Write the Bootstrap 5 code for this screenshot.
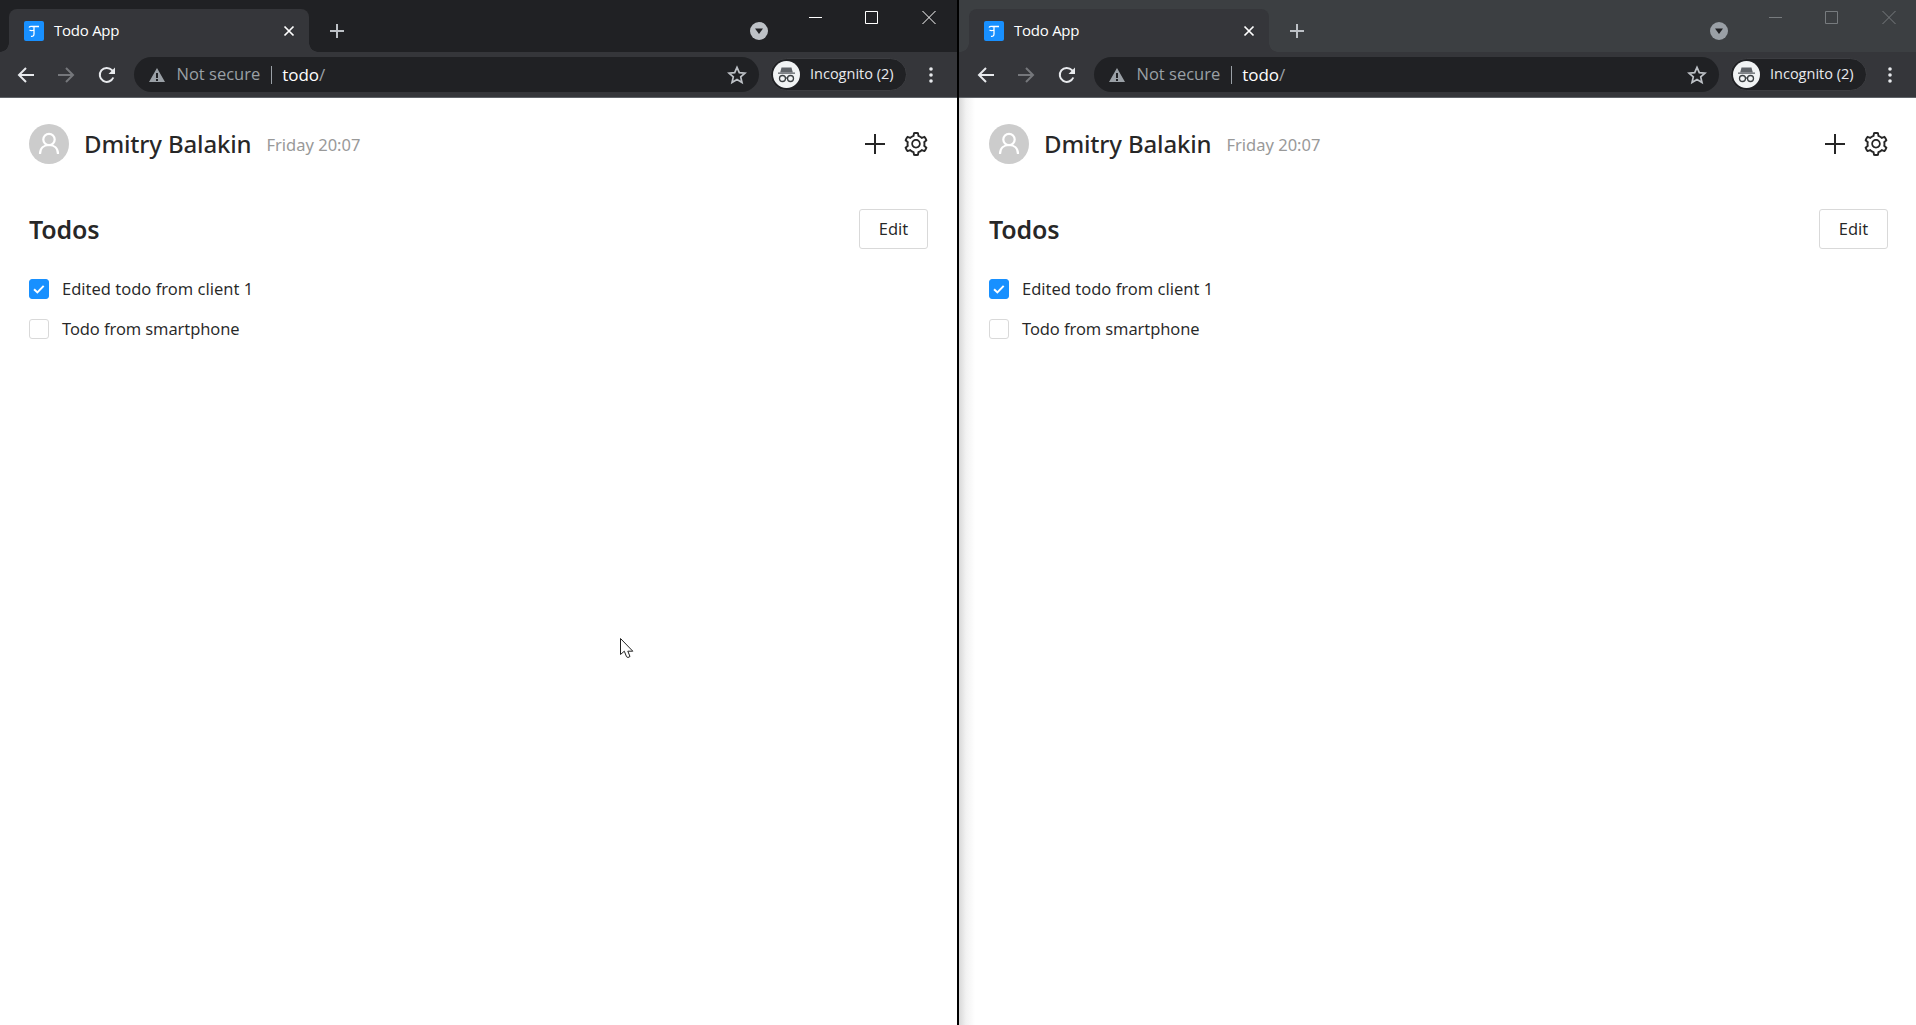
<!DOCTYPE html>
<html lang="en">
<head>
  <meta charset="UTF-8">
  <meta name="viewport" content="width=device-width, initial-scale=1">
  <title>Todo App</title>
  <link href="https://cdn.jsdelivr.net/npm/bootstrap@5.3.3/dist/css/bootstrap.min.css" rel="stylesheet">
  <style>
    html, body { height: 100%; }
    body { font-family: "Noto Sans", "Open Sans", sans-serif; background: #000; overflow: hidden; }

    .desktop { height: 1025px; position: relative; }
    .win-left { width: 957px; margin-right: 2px; }
    .win-right { width: 957px; }

    /* chrome frame */
    .tabstrip { height: 52px; background: #202124; padding-left: 9px; }
    .win-right .tabstrip { background: #3c3f42; padding-left: 10px; }
    .win-tab {
      width: 300px; height: 43px; margin-top: 9px; padding: 0 14px 0 15px;
      background: #35363a; border-radius: 8px 8px 0 0; position: relative;
      color: #fff; font-size: 15px; font-family: "Open Sans", sans-serif;
    }
    .win-tab::before, .win-tab::after {
      content: ""; position: absolute; bottom: 0; width: 9px; height: 9px;
    }
    .win-tab::before { left: -9px; background: radial-gradient(circle at 0 0, transparent 8.5px, #35363a 9px); }
    .win-tab::after { right: -9px; background: radial-gradient(circle at 100% 0, transparent 8.5px, #35363a 9px); }
    .fav-icon { width: 20px; height: 20px; background: #1890ff; border-radius: 2px; flex: none; }
    .tab-label { margin-left: 10px; letter-spacing: -.25px; }
    .new-tab { margin-left: 20px; margin-top: 9px; }
    .list-drop { margin-left: auto; margin-top: 22px; width: 18px; height: 18px; margin-right: 189px; border-radius: 50%; background: #bdc1c6; }
    .win-right .list-drop { background: #9aa0a6; margin-right: 188px; }
    .win-btns { position: absolute; top: 0; right: 5px; color: #fff; }
    .win-right .win-btns { right: 4px; color: #777b7e; }

    .toolbar { height: 46px; background: #35363a; border-bottom: 1px solid #5f6368; padding-left: 16px; }
    .win-right .toolbar { padding-left: 17px; }
    .tool-btn { width: 20px; height: 20px; flex: none; }
    .omnibox {
      width: 625px; height: 35px; margin-left: 17px; padding: 0 12px 0 15px; flex: none;
      background: #202124; border-radius: 18px; font-size: 17px; font-family: "Open Sans", sans-serif;
    }
    .not-secure { color: #9aa0a6; margin-left: 11.500px; font-size: 16.500px; }
    .url-sep { width: 1px; height: 18px; background: #9aa0a6; margin: 0 10px 0 11px; }
    .url-host { color: #fff; }
    .url-path { color: #9aa0a6; }
    .incog-pill {
      width: 137px; height: 33px; margin-left: 11px; padding-left: 2px; flex: none;
      background: #202124; border: 1px solid #3c3d41; border-radius: 17px;
      color: #e8eaed; font-size: 14.500px; font-family: "Open Sans", sans-serif;
    }
    .incog-label { margin-top: -2px; }
    .incog-face { width: 27px; height: 27px; margin-right: 10px; }
    .tool-menu { margin-right: 24px; }

    /* page */
    .page { height: 927px; background: #fff; padding: 26px 29px 0; color: rgba(0,0,0,.85); position: relative; }
    .win-right .page { background: linear-gradient(90deg, #d8d8d8 0, #f2f2f2 7px, #fff 16px); padding: 26px 28px 0 30px; }
    .user-avatar { width: 40px; height: 40px; background: #ccc; border-radius: 50%; flex: none; }
    .user-name { font-size: 24px; font-weight: 500; margin: 0 0 0 15px; line-height: 40px; letter-spacing: -.15px; }
    .user-time { font-size: 16.500px; color: #999; margin-left: 15px; margin-top: 2px; }
    .head-actions { gap: 19px; }
    .todo-head { margin-top: 45px; }
    .todo-title { font-size: 25px; font-weight: 600; margin: 0; letter-spacing: -.2px; }
    .edit-btn {
      width: 69px; height: 40px; padding: 0; font-size: 16.500px; background: #fff;
      color: rgba(0,0,0,.85); border: 1px solid #d9d9d9; border-radius: 3px;
    }
    .todo-rows { margin-top: 20px; font-size: 16.500px; }
    .todo-row { height: 40px; }
    .todo-text-b { letter-spacing: -.1px; }
    .tick { width: 20px; height: 20px; border: 1px solid #d9d9d9; border-radius: 3px; margin-right: 13px; background: #fff; flex: none; }
    .tick-on { background: #1890ff; border-color: #1890ff; }
    .mouse-cursor { position: absolute; left: 620px; top: 540px; }
  </style>
</head>
<body>

<svg width="0" height="0" class="position-absolute">
  <symbol id="ico-fav" viewBox="0 0 20 20"><path d="M5 6.500c1-1.600 2-1 3.500-1H15M10 5.500V13c0 2-1.400 2.800-3 2.300M5.500 9c1.500 1 3.500.5 4.500 0" fill="none" stroke="#fff" stroke-width="1.300"/></symbol>
  <symbol id="ico-x" viewBox="0 0 12 12"><path d="M1.500 1.500l9 9m0-9l-9 9" stroke="currentColor" stroke-width="1.700" fill="none"/></symbol>
  <symbol id="ico-new" viewBox="0 0 16 16"><path d="M8 1v14M1 8h14" stroke="currentColor" stroke-width="2" fill="none"/></symbol>
  <symbol id="ico-drop" viewBox="0 0 18 18"><path d="M5 6.500h8L9 12z" fill="#202124"/></symbol>
  <symbol id="ico-back" viewBox="0 0 20 20"><path d="M18 10H3M10 3l-7 7 7 7" stroke="currentColor" stroke-width="2" fill="none"/></symbol>
  <symbol id="ico-fwd" viewBox="0 0 20 20"><path d="M2 10h15M10 3l7 7-7 7" stroke="currentColor" stroke-width="2" fill="none"/></symbol>
  <symbol id="ico-reload" viewBox="0 0 20 20"><path d="M16.300 12.500A7 7 0 1 1 15 5.200L17 7" stroke="currentColor" stroke-width="2" fill="none"/><path d="M18 2.500V9h-6.500z" fill="currentColor"/></symbol>
  <symbol id="ico-warn" viewBox="0 0 16 16"><path d="M8 1l8 14H0zM7 6v5h2V6zm0 6v2h2v-2z" fill="#9aa0a6" fill-rule="evenodd"/></symbol>
  <symbol id="ico-star" viewBox="0 0 20 20"><path d="M10 2.300l2.300 5.300 5.700.5-4.300 3.800 1.300 5.600-5-3-5 3 1.300-5.600L2 8.100l5.700-.5z" stroke="#bdc1c6" stroke-width="1.700" fill="none"/></symbol>
  <symbol id="ico-incog" viewBox="0 0 27 27"><circle cx="13.500" cy="13.500" r="13.500" fill="#f1f3f4"/><path d="M8.500 6.500h10l1.300 5H7.200z" fill="#5f6368"/><path d="M5 11.500h17v1.300H5z" fill="#5f6368"/><circle cx="9.500" cy="17.500" r="3" fill="none" stroke="#3c4043" stroke-width="1.300"/><circle cx="17.500" cy="17.500" r="3" fill="none" stroke="#3c4043" stroke-width="1.300"/><path d="M12.500 17h2" stroke="#3c4043" stroke-width="1.300"/></symbol>
  <symbol id="ico-dots" viewBox="0 0 4 16"><circle cx="2" cy="2" r="1.800" fill="#e8eaed"/><circle cx="2" cy="8" r="1.800" fill="#e8eaed"/><circle cx="2" cy="14" r="1.800" fill="#e8eaed"/></symbol>
  <symbol id="ico-user" viewBox="0 0 40 40"><circle cx="20" cy="15.500" r="5.700" fill="none" stroke="#fff" stroke-width="2.200"/><path d="M11 30c0-6 4-9 9-9s9 3 9 9" fill="none" stroke="#fff" stroke-width="2.200"/></symbol>
  <symbol id="ico-gear" viewBox="64 64 896 896"><path d="M924.8 625.7l-65.5-56c3.1-19 4.7-38.4 4.7-57.8s-1.6-38.8-4.7-57.8l65.5-56a32.03 32.03 0 0 0 9.3-35.2l-.9-2.6a443.74 443.74 0 0 0-79.7-137.9l-1.8-2.1a32.12 32.12 0 0 0-35.1-9.5l-81.3 28.9c-30-24.6-63.5-44-99.7-57.6l-15.7-85a32.05 32.05 0 0 0-25.8-25.7l-2.7-.5c-52.1-9.4-106.9-9.4-159 0l-2.7.5a32.05 32.05 0 0 0-25.8 25.7l-15.8 85.4a351.86 351.86 0 0 0-99 57.4l-81.9-29.1a32 32 0 0 0-35.1 9.5l-1.8 2.1a446.02 446.02 0 0 0-79.7 137.9l-.9 2.6c-4.5 12.5-.8 26.5 9.3 35.2l66.3 56.6c-3.1 18.8-4.6 38-4.6 57.1 0 19.2 1.5 38.4 4.6 57.1L99 625.5a32.03 32.03 0 0 0-9.3 35.2l.9 2.6c18.1 50.4 44.9 96.9 79.7 137.9l1.8 2.1a32.12 32.12 0 0 0 35.1 9.5l81.9-29.1c29.8 24.5 63.1 43.9 99 57.4l15.8 85.4a32.05 32.05 0 0 0 25.8 25.7l2.7.5a449.4 449.4 0 0 0 159 0l2.7-.5a32.05 32.05 0 0 0 25.8-25.7l15.7-85a350 350 0 0 0 99.7-57.6l81.3 28.9a32 32 0 0 0 35.1-9.5l1.8-2.1c34.8-41.1 61.6-87.5 79.7-137.9l.9-2.6c4.5-12.3.8-26.3-9.3-35zM788.3 465.900c2.5 15.1 3.8 30.6 3.8 46.1s-1.3 31-3.8 46.1l-6.6 40.1 74.7 63.9a370.03 370.03 0 0 1-42.6 73.6L721 702.8l-31.4 25.8c-23.9 19.6-50.5 35-79.3 45.8l-38.1 14.3-17.9 97a377.5 377.5 0 0 1-85 0l-17.9-97.2-37.8-14.5c-28.5-10.8-55-26.2-78.7-45.7l-31.4-25.9-93.4 33.2c-17-22.9-31.2-47.6-42.6-73.6l75.5-64.5-6.5-40c-2.4-14.9-3.7-30.3-3.7-45.5 0-15.3 1.2-30.6 3.7-45.5l6.5-40-75.5-64.5c11.3-26.1 25.6-50.7 42.6-73.6l93.4 33.2 31.4-25.9c23.7-19.5 50.2-34.9 78.7-45.7l37.9-14.3 17.9-97.2c28.1-3.2 56.8-3.2 85 0l17.9 97 38.1 14.3c28.7 10.8 55.4 26.2 79.3 45.8l31.4 25.8 92.8-32.9c17 22.9 31.2 47.6 42.6 73.6L781.8 426l6.5 39.9zM512 326c-97.2 0-176 78.8-176 176s78.8 176 176 176 176-78.8 176-176-78.8-176-176-176zm79.2 255.2A111.6 111.6 0 0 1 512 614c-29.9 0-58-11.7-79.2-32.8A111.6 111.6 0 0 1 400 502c0-29.9 11.7-58 32.8-79.2C454 401.6 482.1 390 512 390c29.9 0 58 11.6 79.2 32.8A111.6 111.6 0 0 1 624 502c0 29.9-11.7 58-32.8 79.200z" fill="currentColor"/></symbol>
  <symbol id="ico-plus" viewBox="0 0 20 20"><path d="M10 0v20M0 10h20" stroke="currentColor" stroke-width="2" fill="none"/></symbol>
  <symbol id="ico-check" viewBox="0 0 20 20"><path d="M4.500 10.200l3.700 3.600 7-7.300" stroke="#fff" stroke-width="2.200" fill="none"/></symbol>
  <symbol id="ico-winbtns" viewBox="0 0 143 30"><path d="M0 17.500h13M56.500 11.500h12v12h-12zM113.500 11l13 13m0-13l-13 13" stroke="currentColor" fill="none"/></symbol>
</svg>

<div class="desktop d-flex">

  <!-- focused window -->
  <div class="win-left position-relative">
    <div class="tabstrip d-flex position-relative">
      <div class="win-tab d-flex align-items-center">
        <svg class="fav-icon"><use href="#ico-fav"/></svg>
        <span class="tab-label flex-grow-1">Todo App</span>
        <svg width="12" height="12" class="text-white"><use href="#ico-x"/></svg>
      </div>
      <svg width="16" height="16" class="new-tab align-self-center" style="color:#bdc1c6"><use href="#ico-new"/></svg>
      <svg class="list-drop"><use href="#ico-drop"/></svg>
      <svg class="win-btns" width="143" height="30"><use href="#ico-winbtns"/></svg>
    </div>
    <div class="toolbar d-flex align-items-center">
      <svg class="tool-btn" style="color:#e8eaed"><use href="#ico-back"/></svg>
      <svg class="tool-btn" style="color:#75777b;margin-left:20px"><use href="#ico-fwd"/></svg>
      <svg class="tool-btn" style="color:#e8eaed;margin-left:21px"><use href="#ico-reload"/></svg>
      <div class="omnibox d-flex align-items-center">
        <svg width="16" height="16"><use href="#ico-warn"/></svg>
        <span class="not-secure">Not secure</span>
        <span class="url-sep"></span>
        <span><span class="url-host">todo</span><span class="url-path">/</span></span>
        <svg width="20" height="20" class="ms-auto"><use href="#ico-star"/></svg>
      </div>
      <div class="incog-pill d-flex align-items-center">
        <svg class="incog-face"><use href="#ico-incog"/></svg>
        <span class="incog-label">Incognito (2)</span>
      </div>
      <svg width="4" height="16" class="tool-menu ms-auto"><use href="#ico-dots"/></svg>
    </div>
    <main class="page">
      <div class="d-flex align-items-center">
        <div class="user-avatar"><svg width="40" height="40" class="d-block"><use href="#ico-user"/></svg></div>
        <h1 class="user-name">Dmitry Balakin</h1>
        <span class="user-time">Friday 20:07</span>
        <div class="head-actions d-flex align-items-center ms-auto">
          <svg width="20" height="20"><use href="#ico-plus"/></svg>
          <svg width="24" height="24"><use href="#ico-gear"/></svg>
        </div>
      </div>
      <div class="todo-head d-flex align-items-center justify-content-between">
        <h2 class="todo-title">Todos</h2>
        <button type="button" class="btn edit-btn">Edit</button>
      </div>
      <div class="todo-rows">
        <div class="todo-row d-flex align-items-center">
          <span class="tick tick-on d-flex"><svg width="18" height="18"><use href="#ico-check"/></svg></span>
          <span>Edited todo from client 1</span>
        </div>
        <div class="todo-row d-flex align-items-center">
          <span class="tick"></span>
          <span class="todo-text-b">Todo from smartphone</span>
        </div>
      </div>
      <svg class="mouse-cursor" width="14" height="22" viewBox="0 0 14 22"><path d="M.5.500v16l3.800-3.300 2.200 5.500 1.500.8 2-1-2.200-5.300h5z" fill="#fff" stroke="#222"/></svg>
    </main>
  </div>

  <!-- inactive window -->
  <div class="win-right position-relative">
    <div class="tabstrip d-flex position-relative">
      <div class="win-tab d-flex align-items-center">
        <svg class="fav-icon"><use href="#ico-fav"/></svg>
        <span class="tab-label flex-grow-1">Todo App</span>
        <svg width="12" height="12" class="text-white"><use href="#ico-x"/></svg>
      </div>
      <svg width="16" height="16" class="new-tab align-self-center" style="color:#bdc1c6"><use href="#ico-new"/></svg>
      <svg class="list-drop"><use href="#ico-drop"/></svg>
      <svg class="win-btns" width="143" height="30"><use href="#ico-winbtns"/></svg>
    </div>
    <div class="toolbar d-flex align-items-center">
      <svg class="tool-btn" style="color:#e8eaed"><use href="#ico-back"/></svg>
      <svg class="tool-btn" style="color:#75777b;margin-left:20px"><use href="#ico-fwd"/></svg>
      <svg class="tool-btn" style="color:#e8eaed;margin-left:21px"><use href="#ico-reload"/></svg>
      <div class="omnibox d-flex align-items-center">
        <svg width="16" height="16"><use href="#ico-warn"/></svg>
        <span class="not-secure">Not secure</span>
        <span class="url-sep"></span>
        <span><span class="url-host">todo</span><span class="url-path">/</span></span>
        <svg width="20" height="20" class="ms-auto"><use href="#ico-star"/></svg>
      </div>
      <div class="incog-pill d-flex align-items-center">
        <svg class="incog-face"><use href="#ico-incog"/></svg>
        <span class="incog-label">Incognito (2)</span>
      </div>
      <svg width="4" height="16" class="tool-menu ms-auto"><use href="#ico-dots"/></svg>
    </div>
    <main class="page">
      <div class="d-flex align-items-center">
        <div class="user-avatar"><svg width="40" height="40" class="d-block"><use href="#ico-user"/></svg></div>
        <h1 class="user-name">Dmitry Balakin</h1>
        <span class="user-time">Friday 20:07</span>
        <div class="head-actions d-flex align-items-center ms-auto">
          <svg width="20" height="20"><use href="#ico-plus"/></svg>
          <svg width="24" height="24"><use href="#ico-gear"/></svg>
        </div>
      </div>
      <div class="todo-head d-flex align-items-center justify-content-between">
        <h2 class="todo-title">Todos</h2>
        <button type="button" class="btn edit-btn">Edit</button>
      </div>
      <div class="todo-rows">
        <div class="todo-row d-flex align-items-center">
          <span class="tick tick-on d-flex"><svg width="18" height="18"><use href="#ico-check"/></svg></span>
          <span>Edited todo from client 1</span>
        </div>
        <div class="todo-row d-flex align-items-center">
          <span class="tick"></span>
          <span class="todo-text-b">Todo from smartphone</span>
        </div>
      </div>
    </main>
  </div>

</div>

<script src="https://cdn.jsdelivr.net/npm/bootstrap@5.3.3/dist/js/bootstrap.bundle.min.js"></script>
</body>
</html>
